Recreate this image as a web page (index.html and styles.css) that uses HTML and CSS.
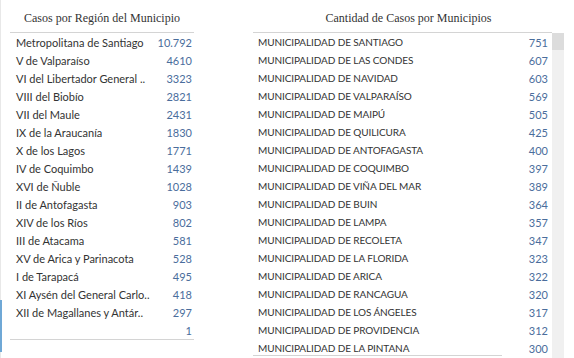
FILE: index.html
```html
<!DOCTYPE html>
<html lang="es">
<head>
<meta charset="utf-8">
<title>Casos por Municipio</title>
<link rel="stylesheet" href="styles.css">
</head>
<body>
<div class="page">
  <section class="panel panel-left">
    <h2 class="title">Casos por Región del Municipio</h2>
    <div class="table">
      <div class="row"><span class="name">Metropolitana de Santiago</span><span class="num">10.792</span></div>
      <div class="row"><span class="name">V de Valparaíso</span><span class="num">4610</span></div>
      <div class="row"><span class="name">VI del Libertador General ..</span><span class="num">3323</span></div>
      <div class="row"><span class="name">VIII del Biobío</span><span class="num">2821</span></div>
      <div class="row"><span class="name">VII del Maule</span><span class="num">2431</span></div>
      <div class="row"><span class="name">IX de la Araucanía</span><span class="num">1830</span></div>
      <div class="row"><span class="name">X de los Lagos</span><span class="num">1771</span></div>
      <div class="row"><span class="name">IV de Coquimbo</span><span class="num">1439</span></div>
      <div class="row"><span class="name">XVI de Ñuble</span><span class="num">1028</span></div>
      <div class="row"><span class="name">II de Antofagasta</span><span class="num">903</span></div>
      <div class="row"><span class="name">XIV de los Ríos</span><span class="num">802</span></div>
      <div class="row"><span class="name">III de Atacama</span><span class="num">581</span></div>
      <div class="row"><span class="name">XV de Arica y Parinacota</span><span class="num">528</span></div>
      <div class="row"><span class="name">I de Tarapacá</span><span class="num">495</span></div>
      <div class="row"><span class="name">XI Aysén del General Carlo..</span><span class="num">418</span></div>
      <div class="row"><span class="name">XII de Magallanes y Antár..</span><span class="num">297</span></div>
      <div class="row"><span class="name"></span><span class="num">1</span></div>
    </div>
  </section>
  <section class="panel panel-right">
    <h2 class="title">Cantidad de Casos por Municipios</h2>
    <div class="scroll">
      <div class="table">
        <div class="row"><span class="name">MUNICIPALIDAD DE SANTIAGO</span><span class="num">751</span></div>
        <div class="row"><span class="name">MUNICIPALIDAD DE LAS CONDES</span><span class="num">607</span></div>
        <div class="row"><span class="name">MUNICIPALIDAD DE NAVIDAD</span><span class="num">603</span></div>
        <div class="row"><span class="name">MUNICIPALIDAD DE VALPARAÍSO</span><span class="num">569</span></div>
        <div class="row"><span class="name">MUNICIPALIDAD DE MAIPÚ</span><span class="num">505</span></div>
        <div class="row"><span class="name">MUNICIPALIDAD DE QUILICURA</span><span class="num">425</span></div>
        <div class="row"><span class="name">MUNICIPALIDAD DE ANTOFAGASTA</span><span class="num">400</span></div>
        <div class="row"><span class="name">MUNICIPALIDAD DE COQUIMBO</span><span class="num">397</span></div>
        <div class="row"><span class="name">MUNICIPALIDAD DE VIÑA DEL MAR</span><span class="num">389</span></div>
        <div class="row"><span class="name">MUNICIPALIDAD DE BUIN</span><span class="num">364</span></div>
        <div class="row"><span class="name">MUNICIPALIDAD DE LAMPA</span><span class="num">357</span></div>
        <div class="row"><span class="name">MUNICIPALIDAD DE RECOLETA</span><span class="num">347</span></div>
        <div class="row"><span class="name">MUNICIPALIDAD DE LA FLORIDA</span><span class="num">323</span></div>
        <div class="row"><span class="name">MUNICIPALIDAD DE ARICA</span><span class="num">322</span></div>
        <div class="row"><span class="name">MUNICIPALIDAD DE RANCAGUA</span><span class="num">320</span></div>
        <div class="row"><span class="name">MUNICIPALIDAD DE LOS ÁNGELES</span><span class="num">317</span></div>
        <div class="row"><span class="name">MUNICIPALIDAD DE PROVIDENCIA</span><span class="num">312</span></div>
        <div class="row"><span class="name">MUNICIPALIDAD DE LA PINTANA</span><span class="num">300</span></div>
      </div>
      <div class="scrollbar"><div class="thumb"></div></div>
    </div>
  </section>
</div>
</body>
</html>
```
FILE: styles.css
```css
html, body {
  margin: 0;
  padding: 0;
  background: #ffffff;
  height: 100%;
  overflow: hidden;
}

.page {
  position: relative;
  display: flex;
  height: 358px;
  border-left: 1px solid #e8e8e8;
  box-sizing: border-box;
  font-family: Lato, "Liberation Sans", sans-serif;
  color: #333333;
}

.page::before {
  content: "";
  position: absolute;
  left: -1px;
  top: 300px;
  width: 2px;
  height: 52px;
  background: #6fa8d6;
}

.panel {
  display: flex;
  flex-direction: column;
}

.title {
  margin: 0;
  height: 33px;
  box-sizing: border-box;
  padding-top: 10px;
  font-family: "Liberation Serif", serif;
  font-weight: normal;
  font-size: 12px;
  line-height: 16px;
  color: #333333;
  text-align: center;
}

.panel-left {
  width: 184px;
  margin-left: 9px;
}

.panel-left .title {
  border-bottom: 1px solid #d4d4d4;
}

.panel-left .table {
  border-bottom: 1px solid #d4d4d4;
}

.panel-left .row {
  padding: 0 2px 0 6px;
}

.panel-right {
  width: 311px;
  margin-left: 59px;
}

.panel-right .title {
  height: 32px;
}

.scroll {
  position: relative;
  display: flex;
  flex: 1;
  overflow: hidden;
}

.scroll::after {
  content: "";
  position: absolute;
  left: 0;
  top: 323px;
  width: 249px;
  height: 1px;
  background: #d4d4d4;
}

.panel-right .table {
  width: 299px;
  border-top: 1px solid #d4d4d4;
}

.panel-right .row {
  padding: 0 4px 0 5px;
}

.row {
  display: flex;
  justify-content: space-between;
  align-items: center;
  height: 18px;
  font-size: 11px;
  white-space: nowrap;
}

.panel-right .name {
  font-size: 10px;
  letter-spacing: -0.1px;
}

.num {
  color: #4a6d9c;
}

.scrollbar {
  width: 12px;
  margin-top: 1px;
  background: #f0f0f0;
}

.thumb {
  height: 17px;
  background: #dcdcdc;
}
```
